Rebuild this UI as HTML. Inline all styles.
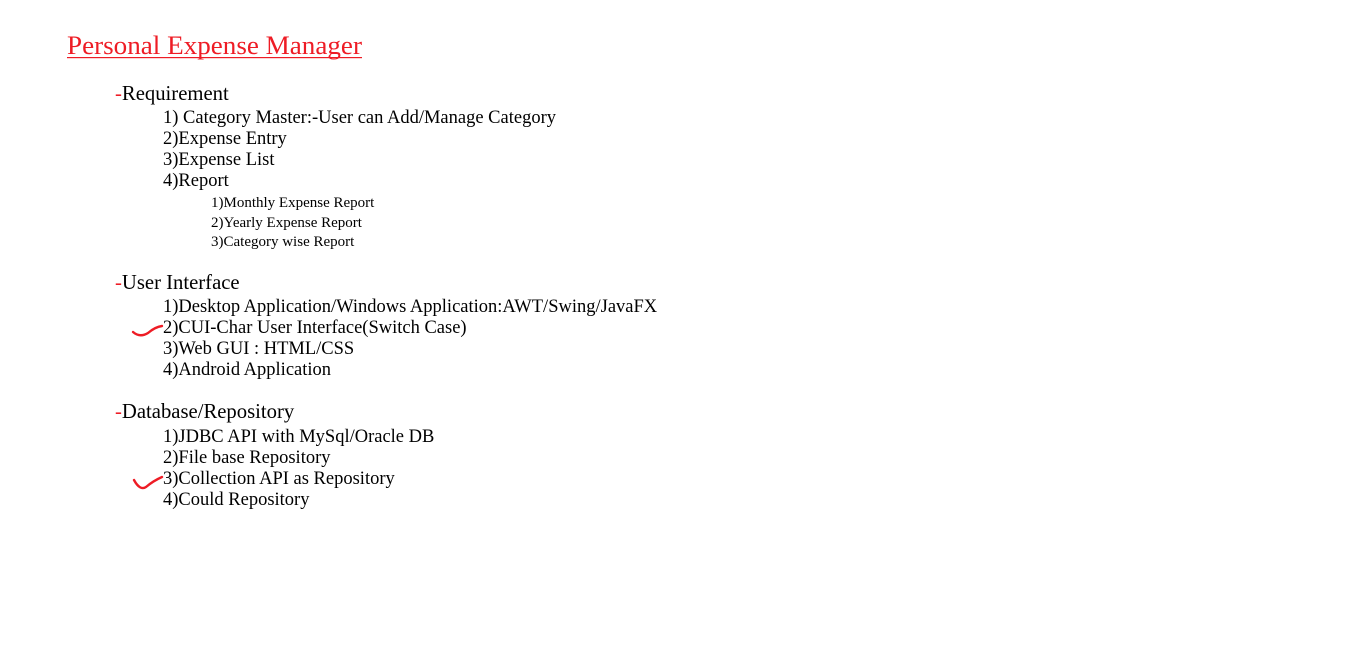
<!DOCTYPE html>
<html><head><meta charset="utf-8"><style>
html,body{margin:0;padding:0;background:#fff;width:1360px;height:652px;overflow:hidden}
text{font-family:"Liberation Serif",serif;fill:#000}
.r{fill:#ee1c25}
</style></head><body>
<svg width="1360" height="652" xmlns="http://www.w3.org/2000/svg">
<text x="67" y="54" font-size="26.5" class="r" textLength="295" lengthAdjust="spacingAndGlyphs">Personal Expense Manager</text>
<rect x="67" y="57" width="295" height="1.2" fill="#ee1c25"/>
<text x="115" y="100" font-size="20.7"><tspan class="r">-</tspan>Requirement</text>
<g font-size="18.5">
<text x="163" y="123">1) Category Master:-User can Add/Manage Category</text>
<text x="163" y="144">2)Expense Entry</text>
<text x="163" y="165">3)Expense List</text>
<text x="163" y="186">4)Report</text>
</g>
<g font-size="15">
<text x="211" y="207">1)Monthly Expense Report</text>
<text x="211" y="227">2)Yearly Expense Report</text>
<text x="211" y="246">3)Category wise Report</text>
</g>
<text x="115" y="289" font-size="20.7"><tspan class="r">-</tspan>User Interface</text>
<g font-size="18.5">
<text x="163" y="312">1)Desktop Application/Windows Application:AWT/Swing/JavaFX</text>
<text x="163" y="333">2)CUI-Char User Interface(Switch Case)</text>
<text x="163" y="354">3)Web GUI : HTML/CSS</text>
<text x="163" y="375">4)Android Application</text>
</g>
<text x="115" y="418" font-size="20.7"><tspan class="r">-</tspan>Database/Repository</text>
<g font-size="18.5">
<text x="163" y="442">1)JDBC API with MySql/Oracle DB</text>
<text x="163" y="463">2)File base Repository</text>
<text x="163" y="484">3)Collection API as Repository</text>
<text x="163" y="505">4)Could Repository</text>
</g>
<path d="M133 332 Q140 338 148 333 Q155 327 162 326" stroke="#ee1c25" stroke-width="2.4" fill="none" stroke-linecap="round"/>
<path d="M134 480 Q140 491 146 487 Q153 481 162 477" stroke="#ee1c25" stroke-width="2.4" fill="none" stroke-linecap="round"/>
</svg>
</body></html>
